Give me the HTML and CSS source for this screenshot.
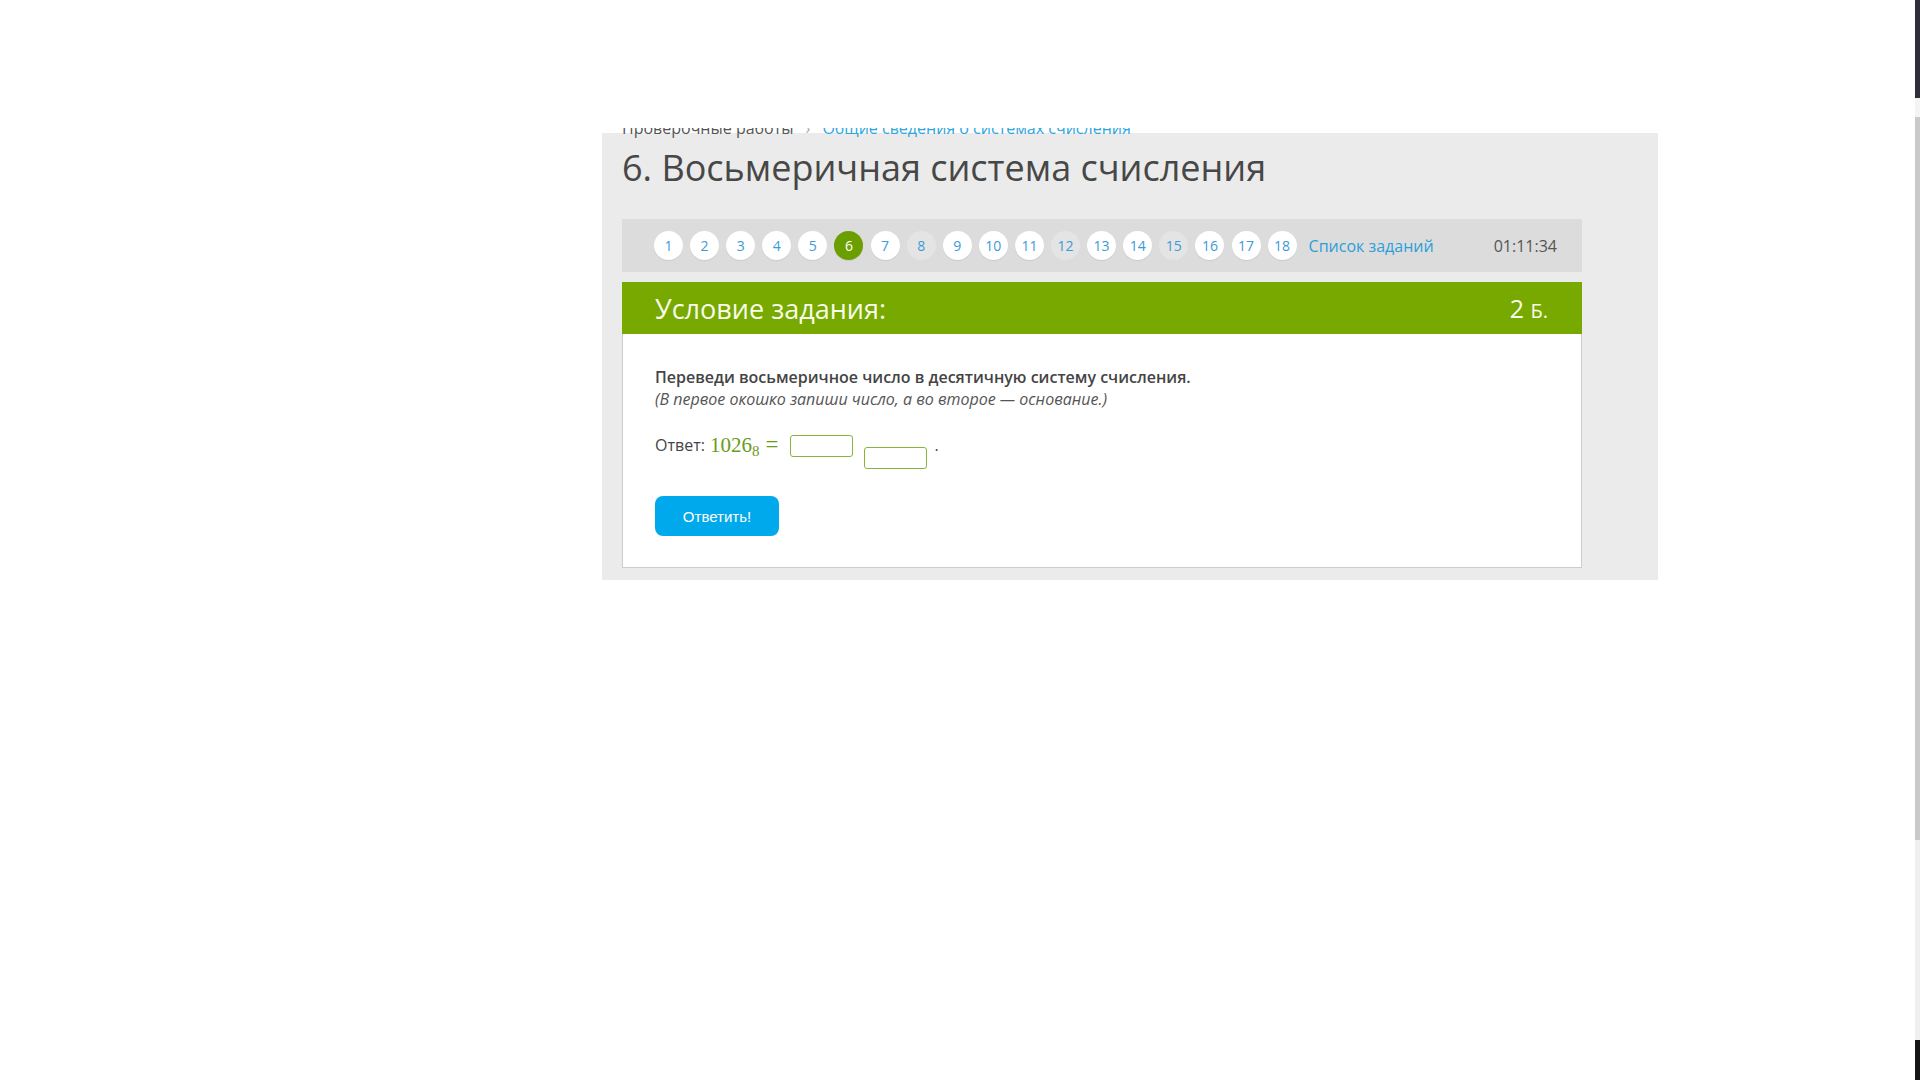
FILE: index.html
```html
<!DOCTYPE html>
<html lang="ru">
<head>
  <meta charset="UTF-8" />
  <title>6. Восьмеричная система счисления</title>
  <link rel="stylesheet" href="styles.css">
</head>
<body>

<div class="scrollbar"></div>

<header class="topbar"></header>

<div class="viewport">
  <main class="panel">
    <div class="crumbs">
      <span class="crumb">Проверочные работы</span><span class="sep">›</span><a class="crumb-link" href="#">Общие сведения о системах счисления</a>
    </div>

    <h1 class="title">6. Восьмеричная система счисления</h1>

    <nav class="tasks-nav">
      <div class="steps">
        <a class="step" href="#">1</a>
        <a class="step" href="#">2</a>
        <a class="step" href="#">3</a>
        <a class="step" href="#">4</a>
        <a class="step" href="#">5</a>
        <a class="step current" href="#">6</a>
        <a class="step" href="#">7</a>
        <a class="step muted" href="#">8</a>
        <a class="step" href="#">9</a>
        <a class="step" href="#">10</a>
        <a class="step" href="#">11</a>
        <a class="step muted" href="#">12</a>
        <a class="step" href="#">13</a>
        <a class="step" href="#">14</a>
        <a class="step muted" href="#">15</a>
        <a class="step" href="#">16</a>
        <a class="step" href="#">17</a>
        <a class="step" href="#">18</a>
      </div>
      <a class="list-link" href="#">Список заданий</a>
      <span class="timer">01:11:34</span>
    </nav>

    <section class="task">
      <div class="task-head">
        <h2>Условие задания:</h2>
        <span class="points">2 <small>Б.</small></span>
      </div>
      <div class="task-body">
        <p class="question">
          <b>Переведи восьмеричное число в десятичную систему счисления.</b><br>
          <i>(В первое окошко запиши число, а во второе — основание.)</i>
        </p>
        <div class="answer">
          <span class="label">Ответ:</span>
          <span class="math">1026<sub>8</sub><span class="eq">=</span></span>
          <span class="box" contenteditable="true"></span>
          <span class="box box-low" contenteditable="true"></span>
          <span class="dot">.</span>
        </div>
        <button class="submit">Ответить!</button>
      </div>
    </section>
  </main>
</div>

</body>
</html>
```

FILE: styles.css
```css
html, body {
  margin: 0; padding: 0;
  background: #ffffff;
  font-family: 'Open Sans', 'Noto Sans', sans-serif;
  color: #444444;
}

/* thin window scrollbar on the right edge */
.scrollbar {
  position: fixed;
  top: 0; right: 0; bottom: 0;
  width: 5px;
  background: linear-gradient(to bottom,
    #2e2e38 0, #2e2e38 98px,
    #f4f4f4 98px, #f4f4f4 117px,
    #c9c9c9 117px, #c9c9c9 840px,
    #efefef 840px, #efefef 1040px,
    #151515 1040px);
  z-index: 100;
}

.topbar {
  height: 128px;
  background: #ffffff;
}

.viewport {
  overflow: hidden;
}

.panel {
  display: flow-root;
  box-sizing: border-box;
  width: 1056px;
  margin: 5px 0 0 602px;
  padding: 0 76px 12px 20px;
  background: #ebebeb;
}

.crumbs {
  margin: -16px 0 6px;
  font-size: 16px;
  line-height: 22px;
  color: #555555;
}

.sep {
  color: #aaaaaa;
  padding: 0 12px;
}

.crumb-link {
  color: #2ea6e0;
  text-decoration: none;
}

.title {
  margin: 0;
  font-size: 36px;
  line-height: 46px;
  font-weight: 400;
  color: #474747;
}

.tasks-nav {
  display: flex;
  align-items: center;
  height: 53px;
  margin-top: 28px;
  padding: 0 25px 0 32px;
  background: #dcdcdc;
}

.steps {
  display: flex;
  gap: 7.1px;
}

.step {
  display: flex;
  align-items: center;
  justify-content: center;
  width: 29px;
  height: 29px;
  border-radius: 50%;
  background: #ffffff;
  box-shadow: 0 1px 1px rgba(0, 0, 0, 0.08);
  color: #3c9ad6;
  font-size: 14px;
  text-decoration: none;
}

.step.muted {
  background: #e4e4e4;
  box-shadow: none;
}

.step.current {
  background: #6b9f00;
  color: #ffffff;
}

.list-link {
  margin-left: 12px;
  font-size: 16px;
  color: #2b9fd9;
  text-decoration: none;
}

.timer {
  margin-left: auto;
  font-size: 16px;
  color: #555555;
}

.task-head {
  display: flex;
  align-items: center;
  justify-content: space-between;
  height: 52px;
  margin-top: 10px;
  padding: 0 34px 0 33px;
  background: #77a900;
  color: #f8fdea;
}

.task-head h2 {
  margin: 0;
  font-size: 27px;
  font-weight: 400;
}

.points {
  font-size: 25px;
}

.points small {
  font-size: 20px;
}

.task-body {
  padding: 32px 32px 31px;
  background: #ffffff;
  border: 1px solid #cccccc;
  border-top: 0;
}

.question {
  margin: 0;
  font-size: 16px;
  line-height: 22px;
}

.question b {
  font-weight: 600;
  color: #444444;
}

.question i {
  color: #555555;
}

.answer {
  display: flex;
  align-items: flex-start;
  margin-top: 24px;
  font-size: 16px;
  line-height: 22px;
}

.math {
  margin-left: 5px;
  font-family: 'Liberation Serif', 'DejaVu Serif', serif;
  font-size: 21px;
  line-height: 22px;
  color: #6a9b1c;
}

.math sub {
  font-size: 15px;
  line-height: 0;
  vertical-align: -4px;
}

.eq {
  margin-left: 6px;
  font-size: 23px;
}

.box {
  display: inline-block;
  box-sizing: border-box;
  width: 63px;
  height: 22px;
  margin: 1px 0 0 12px;
  border: 1px solid #8ab33c;
  border-radius: 3px;
  background: #ffffff;
  outline: none;
}

.box-low {
  margin: 13px 0 0 11px;
}

.dot {
  margin-left: 7px;
}

.submit {
  display: block;
  width: 124px;
  height: 40px;
  margin-top: 27px;
  border: 0;
  border-radius: 8px;
  background: #00a9eb;
  color: #ffffff;
  font-family: 'Liberation Sans', Arial, sans-serif;
  font-size: 15px;
  cursor: pointer;
}
```
